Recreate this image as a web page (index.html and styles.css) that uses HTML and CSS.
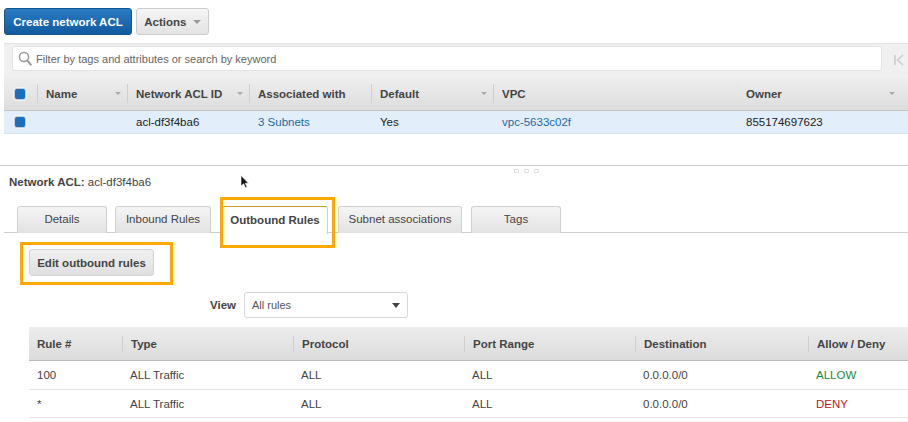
FILE: index.html
```html
<!DOCTYPE html>
<html lang="en">
<head>
  <meta charset="UTF-8">
  <title>Network ACLs</title>
  <meta name="viewport" content="width=device-width, initial-scale=1.0">
  <link rel="stylesheet" href="styles.css">
</head>
<body>
  <div class="toolbar">
    <button class="btn btn-primary">Create network ACL</button>
    <button class="btn btn-actions">Actions <span class="caret-small"></span></button>
  </div>

  <div class="filter-bar">
    <div class="filter-input">
      <svg class="search-icon" width="14" height="15" viewBox="0 0 14 15"><circle cx="6" cy="6" r="4.6" fill="none" stroke="#999" stroke-width="1.5"/><path d="M9.4 9.6l3.4 4" stroke="#999" stroke-width="2" stroke-linecap="round"/></svg>
      <span>Filter by tags and attributes or search by keyword</span>
    </div>
    <svg class="first-page" width="10" height="12" viewBox="0 0 10 12"><path d="M1 1v10M9 1L3.5 6 9 11" fill="none" stroke="#cbcbcb" stroke-width="1.6"/></svg>
  </div>

  <div class="acl-table">
    <div class="acl-row acl-head">
      <div class="cell cell-check"><span class="checkbox"></span></div>
      <div class="cell">Name<span class="sort"></span></div>
      <div class="cell">Network ACL ID<span class="sort"></span></div>
      <div class="cell">Associated with</div>
      <div class="cell">Default<span class="sort"></span></div>
      <div class="cell">VPC</div>
      <div class="cell cell-faint">Owner<span class="sort sort-last"></span></div>
    </div>
    <div class="acl-row acl-selected">
      <div class="cell cell-check"><span class="checkbox"></span></div>
      <div class="cell"></div>
      <div class="cell">acl-df3f4ba6</div>
      <div class="cell"><a class="link">3 Subnets</a></div>
      <div class="cell">Yes</div>
      <div class="cell"><a class="link">vpc-5633c02f</a></div>
      <div class="cell">855174697623</div>
    </div>
  </div>

  <div class="detail">
    <div class="handle"><i></i><i></i><i></i></div>
    <div class="detail-title"><b>Network ACL:</b> acl-df3f4ba6</div>
    <svg class="cursor" width="10" height="14" viewBox="0 0 10 14"><path d="M1 0.5v10.5l2.6-2.2 1.8 4 1.6-.7-1.8-3.9h3.3z" fill="#111" stroke="#fff" stroke-width=".6"/></svg>

    <div class="tabs">
      <div class="tab tab-details">Details</div>
      <div class="tab tab-inbound">Inbound Rules</div>
      <div class="tab tab-active">Outbound Rules</div>
      <div class="tab tab-subnet">Subnet associations</div>
      <div class="tab tab-tags">Tags</div>
    </div>

    <div class="edit-wrap">
      <button class="btn btn-edit">Edit outbound rules</button>
    </div>

    <div class="view-row">
      <b>View</b>
      <div class="select">All rules<span class="caret"></span></div>
    </div>

    <div class="rules">
      <div class="rules-row rules-head">
        <div class="rcell">Rule #</div>
        <div class="rcell">Type</div>
        <div class="rcell">Protocol</div>
        <div class="rcell">Port Range</div>
        <div class="rcell">Destination</div>
        <div class="rcell">Allow / Deny</div>
      </div>
      <div class="rules-row">
        <div class="rcell">100</div>
        <div class="rcell">ALL Traffic</div>
        <div class="rcell">ALL</div>
        <div class="rcell">ALL</div>
        <div class="rcell">0.0.0.0/0</div>
        <div class="rcell allow">ALLOW</div>
      </div>
      <div class="rules-row">
        <div class="rcell">*</div>
        <div class="rcell">ALL Traffic</div>
        <div class="rcell">ALL</div>
        <div class="rcell">ALL</div>
        <div class="rcell">0.0.0.0/0</div>
        <div class="rcell deny">DENY</div>
      </div>
    </div>
  </div>
</body>
</html>
```

FILE: styles.css
```css
:root {
  --text: #444;
  --link: #1f6aa5;
  --orange: #ffa800;
  --line: #cfcfcf;
}

body {
  margin: 0;
  font-family: "Liberation Sans", Arial, sans-serif;
  font-size: 11.5px;
  color: var(--text);
  background: white;
  overflow: hidden;
}

.toolbar {
  display: flex;
  gap: 4px;
  height: 43px;
  padding: 8px 0 0 4px;
  box-sizing: border-box;
}
.btn {
  font-family: inherit;
  font-size: 11.5px;
  font-weight: bold;
  height: 27px;
  border-radius: 3px;
  padding: 0;
  cursor: pointer;
}
.btn-primary {
  width: 128px;
  color: white;
  background: linear-gradient(#2a7cc4, #125a9e);
  border: 1px solid #14568f;
}
.btn-actions {
  width: 73px;
  color: var(--text);
  background: linear-gradient(#f5f5f5, #e3e3e3);
  border: 1px solid #ccc;
}
.caret-small {
  display: inline-block;
  margin-left: 3px;
  vertical-align: 2px;
  border-left: 4px solid transparent;
  border-right: 4px solid transparent;
  border-top: 4px solid #999;
}

.filter-bar {
  display: flex;
  align-items: center;
  height: 34px;
  margin-left: 4px;
  padding: 0 0 0 8px;
  box-sizing: border-box;
  background: #f0f0f0;
  border-top: 1px solid #e2e2e2;
}
.filter-input {
  display: flex;
  align-items: center;
  width: 870px;
  height: 25px;
  box-sizing: border-box;
  padding-left: 5px;
  gap: 4px;
  margin-top: -4px;
  background: white;
  border: 1px solid #e2e2e2;
  border-radius: 3px;
  color: #666;
  font-size: 11px;
}
.first-page {
  margin: -2px 0 0 12px;
}

.acl-table {
  margin-left: 4px;
}
.acl-row {
  display: grid;
  grid-template-columns: 33px 90px 122px 122px 122px 244px 1fr;
}
.acl-head {
  height: 34px;
  box-sizing: border-box;
  background: linear-gradient(#eeeeee, #dddddd);
  border-bottom: 1px solid #c4c4c4;
  font-weight: bold;
}
.acl-selected {
  height: 22px;
  background: #e2eefa;
  border-bottom: 1px solid #d6e2ee;
  color: #222;
}
.cell {
  position: relative;
  display: flex;
  align-items: center;
  padding-left: 9px;
}
.acl-head .cell {
  margin: 7px 0;
  padding-left: 8px;
  border-left: 1px solid #cfcfcf;
}
.acl-head .cell-check {
  padding-left: 10px;
  border-left: none;
}
.acl-head .cell-faint {
  border-left-color: #e4e4e4;
}
.cell-check {
  padding-left: 10px;
}
.checkbox {
  width: 10px;
  height: 10px;
  background: #1d6fbe;
  border: 1px solid #c4ced8;
  border-radius: 3px;
  box-shadow: 0 0 0 1px #f4f4f4;
}
.sort {
  position: absolute;
  right: 6px;
  top: 8px;
  border-left: 3px solid transparent;
  border-right: 3px solid transparent;
  border-top: 3px solid #aaa;
}
.sort-last {
  right: 13px;
}
.link {
  color: var(--link);
}

.detail {
  position: relative;
  margin-top: 31px;
  border-top: 1px solid var(--line);
}
.handle {
  position: absolute;
  top: 3px;
  left: 514px;
  display: flex;
  gap: 5px;
}
.handle i {
  width: 3px;
  height: 2px;
  border: 1px solid #ddd;
  border-radius: 1px;
}
.detail-title {
  padding: 9px 0 0 9px;
  height: 31px;
  box-sizing: border-box;
  line-height: 14px;
}
.cursor {
  position: absolute;
  left: 240px;
  top: 9px;
}

.tabs {
  display: flex;
  height: 27px;
  box-sizing: border-box;
  margin: 9px 0 0 4px;
  padding-left: 13px;
  border-bottom: 1px solid var(--line);
}
.tab {
  box-sizing: border-box;
  height: 27px;
  line-height: 24px;
  text-align: center;
  background: linear-gradient(#f5f5f5, #e2e2e2);
  border: 1px solid #d0d0d0;
  border-bottom: none;
  border-radius: 3px 3px 0 0;
  font-size: 11.5px;
}
.tab-details { width: 90px; margin-right: 8px; }
.tab-inbound { width: 96px; margin-right: 11px; }
.tab-active {
  position: relative;
  width: 106px;
  margin-right: 10px;
  height: 28px;
  line-height: 26px;
  font-weight: bold;
  background: white;
  border-top: 1px solid #c79a2a;
}
/* orange callouts from the annotated screenshot */
.tab-active::after {
  content: "";
  position: absolute;
  left: -3px;
  top: -10px;
  width: 115px;
  height: 51px;
  box-sizing: border-box;
  border: 3px solid var(--orange);
}
.tab-subnet { width: 124px; margin-right: 9px; }
.tab-tags { width: 90px; }

.edit-wrap {
  display: inline-block;
  margin: 9px 0 0 20px;
  padding: 4px 16px 6px 6px;
  border: 3px solid var(--orange);
  height: 43px;
  box-sizing: border-box;
}
.btn-edit {
  display: block;
  width: 125px;
  color: var(--text);
  background: linear-gradient(#f0f0f0, #e0e0e0);
  border: 1px solid #d4d4d4;
}

.view-row {
  display: flex;
  align-items: center;
  gap: 8px;
  margin: 7px 0 0 210px;
  height: 26px;
}
.select {
  position: relative;
  width: 164px;
  height: 26px;
  line-height: 25px;
  box-sizing: border-box;
  padding-left: 7px;
  border: 1px solid #d8d8d8;
  border-radius: 3px;
  font-size: 11px;
  color: #555;
}
.caret {
  position: absolute;
  top: 10px;
  right: 7px;
  border-left: 4px solid transparent;
  border-right: 4px solid transparent;
  border-top: 5px solid #444;
}

.rules {
  margin: 9px 0 0 29px;
}
.rules-row {
  display: grid;
  grid-template-columns: 93px 171px 171px 171px 173px 1fr;
  height: 29px;
  box-sizing: border-box;
  align-items: center;
  border-bottom: 1px solid #e6e6e6;
}
.rules-row:last-child {
  height: 28px;
}
.rules-head {
  height: 34px;
  background: linear-gradient(#ececec, #dcdcdc);
  border-bottom: 1px solid #bbb;
  font-weight: bold;
}
.rcell {
  padding-left: 8px;
}
.rules-head .rcell {
  height: 16px;
  line-height: 16px;
  border-left: 1px solid #cfcfcf;
}
.rules-head .rcell:first-child {
  border-left: none;
}
.allow { color: #1d8a3c; }
.deny { color: #b8202a; }
```
